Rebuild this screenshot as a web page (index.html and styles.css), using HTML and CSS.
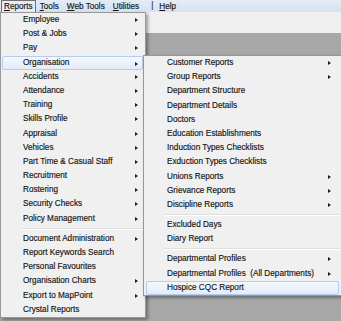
FILE: index.html
```html
<!DOCTYPE html>
<html lang="en">
<head>
    <meta charset="UTF-8">
    <title>Reports Menu</title>
    <link rel="stylesheet" href="styles.css">
</head>
<body>
    <div class="window">
        <div class="menubar">
            <span class="bar-item open"><u>R</u>eports</span>
            <span class="bar-item"><u>T</u>ools</span>
            <span class="bar-item"><u>W</u>eb Tools</span>
            <span class="bar-item"><u>U</u>tilities</span>
            <span class="bar-divider">|</span>
            <span class="bar-item"><u>H</u>elp</span>
        </div>
        <div class="toolbar"></div>
        <div class="workspace"></div>

        <div class="menu main-menu">
            <div class="item sub">Employee</div>
            <div class="item sub">Post &amp; Jobs</div>
            <div class="item sub">Pay</div>
            <div class="item sub active">Organisation</div>
            <div class="item sub">Accidents</div>
            <div class="item sub">Attendance</div>
            <div class="item sub">Training</div>
            <div class="item sub">Skills Profile</div>
            <div class="item sub">Appraisal</div>
            <div class="item sub">Vehicles</div>
            <div class="item sub">Part Time &amp; Casual Staff</div>
            <div class="item sub">Recruitment</div>
            <div class="item sub">Rostering</div>
            <div class="item sub">Security Checks</div>
            <div class="item sub">Policy Management</div>
            <div class="sep"></div>
            <div class="item sub">Document Administration</div>
            <div class="item">Report Keywords Search</div>
            <div class="item">Personal Favourites</div>
            <div class="item sub">Organisation Charts</div>
            <div class="item sub">Export to MapPoint</div>
            <div class="item">Crystal Reports</div>
        </div>

        <div class="menu sub-menu">
            <div class="item sub">Customer Reports</div>
            <div class="item sub">Group Reports</div>
            <div class="item">Department Structure</div>
            <div class="item">Department Details</div>
            <div class="item">Doctors</div>
            <div class="item">Education Establishments</div>
            <div class="item">Induction Types Checklists</div>
            <div class="item">Exduction Types Checklists</div>
            <div class="item sub">Unions Reports</div>
            <div class="item sub">Grievance Reports</div>
            <div class="item sub">Discipline Reports</div>
            <div class="sep"></div>
            <div class="item">Excluded Days</div>
            <div class="item">Diary Report</div>
            <div class="sep"></div>
            <div class="item sub">Departmental Profiles</div>
            <div class="item sub">Departmental Profiles  (All Departments)</div>
            <div class="item active">Hospice CQC Report</div>
        </div>
    </div>
</body>
</html>
```

FILE: styles.css
```css
body {
    margin: 0;
    background: #a8a8a8;
    font-family: "Liberation Sans", Arial, sans-serif;
    font-size: 8.2px;
    color: #141414;
    -webkit-text-stroke: 0.15px #141414;
}

.window {
    position: relative;
    width: 341px;
    height: 321px;
    overflow: hidden;
    display: flex;
    flex-direction: column;
}

.menubar {
    height: 12px;
    display: flex;
    align-items: stretch;
    padding-left: 1px;
    background: linear-gradient(#e4ecf6, #d6e1ef);
    box-sizing: border-box;
}

.bar-item {
    padding: 0 3px;
    line-height: 11px;
    border: 1px solid transparent;
    border-bottom: none;
}

    .bar-item.open {
        border-color: #6f6f6f;
        background: #e9edf2;
        padding: 0 2px;
    }

.bar-divider {
    line-height: 12px;
    margin-left: 8px;
    margin-right: 2px;
    color: #333;
}

.toolbar {
    height: 21px;
    background: #efefef;
}

.workspace {
    flex: 1;
    background: #a8a8a8;
}

.menu {
    position: absolute;
    background: #f0f0f0;
    border: 1px solid #979797;
    box-sizing: border-box;
    box-shadow: 2px 2px 3px rgba(0, 0, 0, 0.35);
}

.main-menu {
    left: 0;
    top: 12px;
    width: 146px;
    height: 306px;
}

.sub-menu {
    left: 143px;
    top: 55px;
    width: 200px;
    height: 241px;
}

.item {
    position: relative;
    height: 14.2px;
    line-height: 14.2px;
    margin: 0 2px 0 1px;
    padding-left: 20px;
    white-space: pre;
    box-sizing: border-box;
    border: 1px solid transparent;
    border-width: 0 1px;
}

.sub-menu .item {
    margin: 0 3px 0 2px;
}

    .item.sub::after {
        content: "";
        position: absolute;
        right: 4px;
        top: 5px;
        border-left: 3px solid #1c1c1c;
        border-top: 2.5px solid transparent;
        border-bottom: 2.5px solid transparent;
    }

.sub-menu .item.sub::after {
    right: 7px;
}

    .item.active {
        background: linear-gradient(#f4f8fd, #e3ecf8);
        border: 1px solid #b4cdee;
        border-radius: 2px;
        line-height: 12.2px;
    }

.sep {
    height: 6px;
    margin-left: 20px;
    margin-right: 2px;
    position: relative;
}

    .sep::before {
        content: "";
        position: absolute;
        left: 0;
        right: 0;
        top: 2px;
        border-top: 1px solid #e0e0e0;
        border-bottom: 1px solid #ffffff;
    }
```
